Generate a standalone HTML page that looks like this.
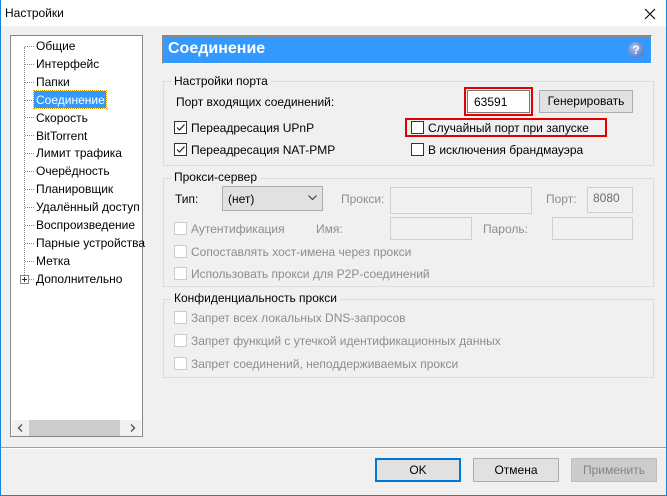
<!DOCTYPE html>
<html><head><meta charset="utf-8"><style>
*{margin:0;padding:0;box-sizing:border-box}
body{width:667px;height:496px;position:relative;background:#f0f0f0;font-family:"Liberation Sans","DejaVu Sans",sans-serif;font-size:12px;color:#000;overflow:hidden}
.a{position:absolute;white-space:nowrap}
.t{position:absolute;white-space:nowrap;line-height:14px}
.cb{position:absolute;width:13px;height:13px;border:1px solid #333;background:#fff}
.cb.d{border-color:#ccc}
.g{color:#8d8d8d}
.grp{position:absolute;border:1px solid #dcdcdc}
.lg{position:absolute;background:#f0f0f0;padding:0 3px;line-height:14px}
.fld{position:absolute;border:1px solid #cfcfcf;background:#f0f0f0}
.btn{position:absolute;border:1px solid #adadad;background:#e1e1e1;text-align:center;line-height:21px}
</style></head><body>
<div class="a" style="left:0;top:0;width:667px;height:26px;background:#fff"></div>
<div class="t" style="left:5px;top:6px">Настройки</div>
<svg class="a" style="left:644px;top:8px" width="12" height="12"><path d="M1 1L11 11M11 1L1 11" stroke="#000" stroke-width="1.1"/></svg>
<div class="a" style="left:0;top:0;width:1px;height:496px;background:#1883d7"></div>
<div class="a" style="left:666px;top:0;width:1px;height:496px;background:#1883d7"></div>
<div class="a" style="left:0;top:495px;width:667px;height:1px;background:#1883d7"></div>

<!-- tree -->
<div class="a" style="left:10px;top:35px;width:133px;height:402px;border:1px solid #828790;background:#fff"></div>
<div class="a" style="left:24px;top:47px;height:234px;border-left:1px dotted #888"></div>
<div class="a" style="left:34px;top:91px;width:72px;height:17px;background:#3399ff;outline:1px dotted #e0a000"></div>
<div class="t" style="left:36px;top:38px;line-height:17.9px">
<div>Общие</div><div>Интерфейс</div><div>Папки</div><div style="color:#fff">Соединение</div><div>Скорость</div><div>BitTorrent</div><div>Лимит трафика</div><div>Очерёдность</div><div>Планировщик</div><div>Удалённый доступ</div><div>Воспроизведение</div><div>Парные устройства</div><div>Метка</div><div>Дополнительно</div>
</div>
<svg class="a" style="left:24px;top:46px" width="12" height="240">
<g stroke="#888" stroke-dasharray="1 1"><path d="M1 .5H11M1 18.5H11M1 36.5H11M1 54.5H11M1 71.5H11M1 89.5H11M1 107.5H11M1 125.5H11M1 143.5H11M1 161.5H11M1 179.5H11M1 197.5H11M1 215.5H11M5 233.5H11"/></g>
</svg>
<div class="a" style="left:20px;top:275px;width:9px;height:9px;border:1px solid #888;background:#fff"></div>
<div class="a" style="left:22px;top:279px;width:5px;height:1px;background:#333"></div>
<div class="a" style="left:24px;top:277px;width:1px;height:5px;background:#333"></div>
<div class="a" style="left:12px;top:420px;width:129px;height:16px;background:#f0f0f0"></div>
<div class="a" style="left:29px;top:420px;width:91px;height:16px;background:#cdcdcd"></div>
<svg class="a" style="left:17px;top:424px" width="6" height="8"><path d="M5 .5L1.5 4L5 7.5" fill="none" stroke="#555" stroke-width="1.4"/></svg>
<svg class="a" style="left:130px;top:424px" width="6" height="8"><path d="M1 .5L4.5 4L1 7.5" fill="none" stroke="#555" stroke-width="1.4"/></svg>

<!-- header -->
<div class="a" style="left:162px;top:35px;width:490px;height:29px;background:#3399ff;border-top:2px solid #888;border-left:2px solid #888;border-bottom:1px solid #fff;border-right:1px solid #fff"></div>
<div class="a" style="left:168px;top:39px;color:#fff;font-weight:bold;font-size:16px;line-height:19px">Соединение</div>
<div class="a" style="left:628px;top:42px;width:16px;height:16px;border-radius:50%;background:radial-gradient(circle at 40% 35%,#a8c4f0,#3c64b8);color:#fff;font-weight:bold;font-size:12px;text-align:center;line-height:16px">?</div>

<!-- port group -->
<div class="grp" style="left:163px;top:81px;width:491px;height:85px"></div>
<div class="lg" style="left:171px;top:74px">Настройки порта</div>
<div class="t" style="left:176px;top:95px">Порт входящих соединений:</div>
<div class="a" style="left:464px;top:87px;width:69px;height:29px;border:2px solid #e00000"></div>
<div class="a" style="left:467px;top:90px;width:63px;height:23px;border:1px solid #7a7a7a;background:#fff"></div>
<div class="t" style="left:474px;top:95px">63591</div>
<div class="btn" style="left:539px;top:90px;width:94px;height:23px">Генерировать</div>
<div class="cb" style="left:174px;top:121px"></div><svg class="a" style="left:175px;top:122px" width="11" height="11"><path d="M2 5.5L4.5 8L9.5 2.5" fill="none" stroke="#222" stroke-width="1.2"/></svg>
<div class="t" style="left:191px;top:121px">Переадресация UPnP</div>
<div class="cb" style="left:174px;top:143px"></div><svg class="a" style="left:175px;top:144px" width="11" height="11"><path d="M2 5.5L4.5 8L9.5 2.5" fill="none" stroke="#222" stroke-width="1.2"/></svg>
<div class="t" style="left:191px;top:143px">Переадресация NAT-PMP</div>
<div class="a" style="left:405px;top:118px;width:202px;height:19px;border:2px solid #e00000"></div>
<div class="cb" style="left:411px;top:121px"></div>
<div class="t" style="left:428px;top:121px">Случайный порт при запуске</div>
<div class="cb" style="left:411px;top:143px"></div>
<div class="t" style="left:428px;top:143px">В исключения брандмауэра</div>

<!-- proxy group -->
<div class="grp" style="left:163px;top:178px;width:491px;height:109px"></div>
<div class="lg" style="left:171px;top:170px">Прокси-сервер</div>
<div class="t" style="left:175px;top:192px">Тип:</div>
<div class="a" style="left:222px;top:186px;width:101px;height:25px;border:1px solid #adadad;background:#e1e1e1"></div>
<div class="t" style="left:228px;top:192px">(нет)</div>
<svg class="a" style="left:308px;top:195px" width="9" height="6"><path d="M.5 .5L4.5 4.5L8.5 .5" fill="none" stroke="#333"/></svg>
<div class="t g" style="left:341px;top:192px">Прокси:</div>
<div class="fld" style="left:390px;top:187px;width:142px;height:27px"></div>
<div class="t g" style="left:546px;top:192px">Порт:</div>
<div class="fld" style="left:587px;top:187px;width:46px;height:26px"></div>
<div class="t g" style="left:593px;top:191px;color:#6d6d6d">8080</div>
<div class="cb d" style="left:174px;top:222px"></div>
<div class="t g" style="left:191px;top:222px">Аутентификация</div>
<div class="t g" style="left:316px;top:222px">Имя:</div>
<div class="fld" style="left:390px;top:217px;width:82px;height:23px"></div>
<div class="t g" style="left:483px;top:222px">Пароль:</div>
<div class="fld" style="left:552px;top:217px;width:81px;height:23px"></div>
<div class="cb d" style="left:174px;top:245px"></div>
<div class="t g" style="left:191px;top:245px">Сопоставлять хост-имена через прокси</div>
<div class="cb d" style="left:174px;top:267px"></div>
<div class="t g" style="left:191px;top:267px">Использовать прокси для P2P-соединений</div>

<!-- privacy group -->
<div class="grp" style="left:163px;top:299px;width:491px;height:79px"></div>
<div class="lg" style="left:171px;top:291px">Конфиденциальность прокси</div>
<div class="cb d" style="left:174px;top:311px"></div>
<div class="t g" style="left:191px;top:311px">Запрет всех локальных DNS-запросов</div>
<div class="cb d" style="left:174px;top:334px"></div>
<div class="t g" style="left:191px;top:334px">Запрет функций с утечкой идентификационных данных</div>
<div class="cb d" style="left:174px;top:357px"></div>
<div class="t g" style="left:191px;top:357px">Запрет соединений, неподдерживаемых прокси</div>

<!-- bottom -->
<div class="a" style="left:1px;top:447px;width:665px;height:1px;background:#a0a0a0"></div>
<div class="a" style="left:1px;top:448px;width:665px;height:1px;background:#fff"></div>
<div class="btn" style="left:375px;top:458px;width:86px;height:24px;border:2px solid #0078d7;line-height:20px">OK</div>
<div class="btn" style="left:473px;top:458px;width:86px;height:24px;line-height:22px">Отмена</div>
<div class="btn" style="left:571px;top:458px;width:86px;height:24px;line-height:22px;background:#ccc;border-color:#bfbfbf;color:#838383">Применить</div>
</body></html>
